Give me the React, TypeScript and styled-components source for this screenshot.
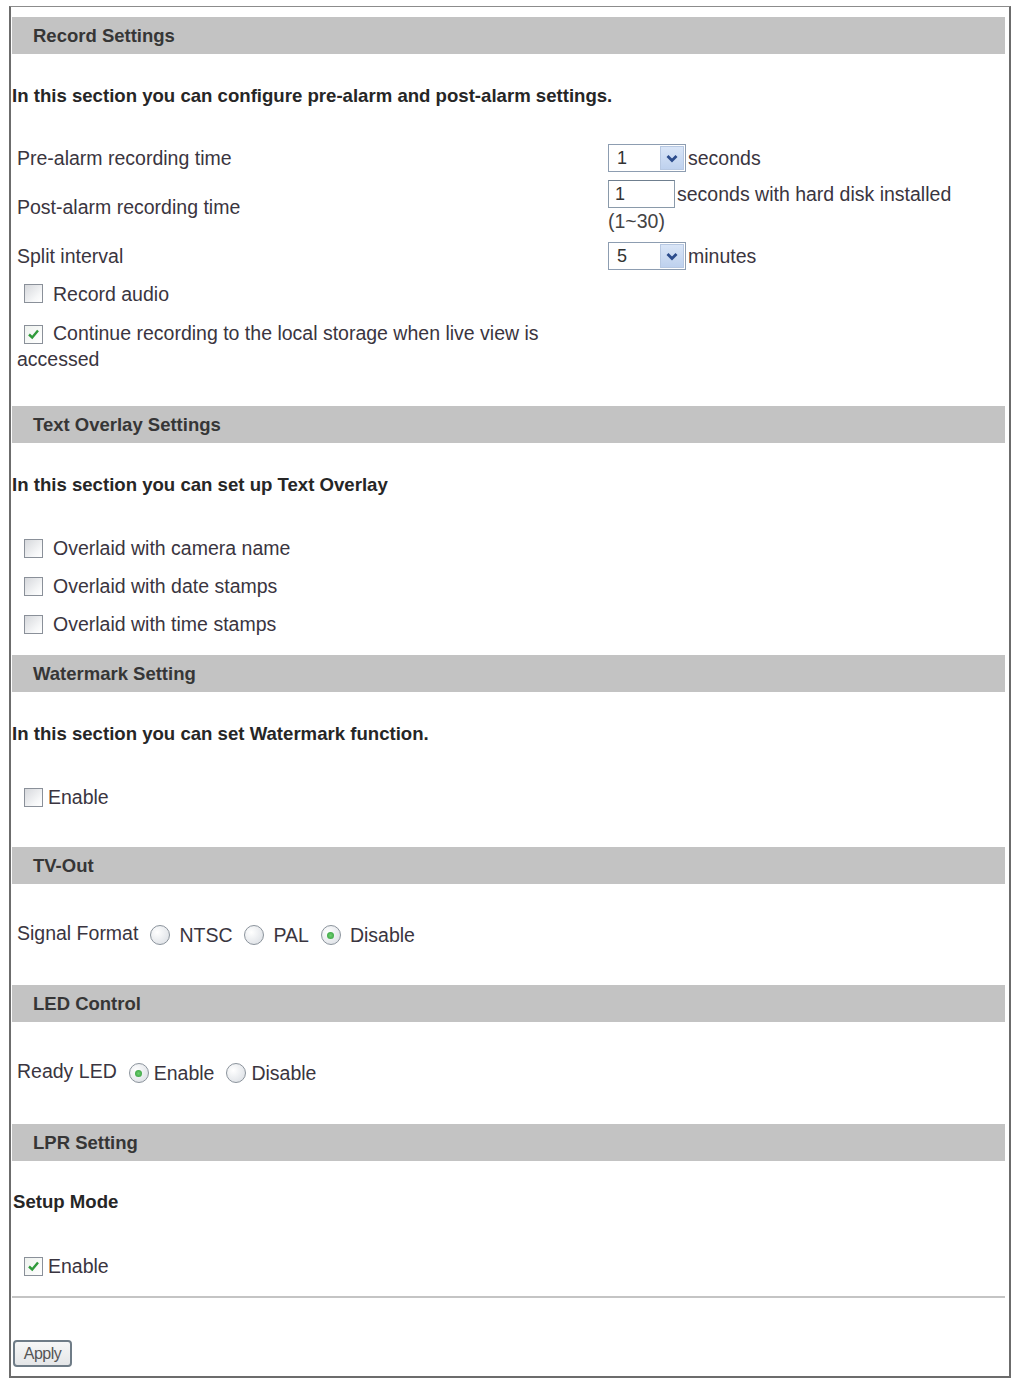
import styled, { createGlobalStyle } from 'styled-components';

const GlobalStyle = createGlobalStyle`
  body {
    margin: 0;
    background: #ffffff;
    font-family: "Liberation Sans", Arial, sans-serif;
    color: #383838;
  }
`;

const Frame = styled.div`
  box-sizing: border-box;
  width: 1002px;
  margin: 6px 0 0 9px;
  border: 2px solid #6c6c6c;
  border-top: 1px solid #8c8c8c;
  padding: 10px 4px 9px 1px;
`;

const SectionHeader = styled.div<{ $gap: number }>`
  display: flex;
  align-items: center;
  height: 37px;
  margin-top: ${({ $gap }) => $gap}px;
  padding-left: 21px;
  background: #c3c3c3;
  color: #363636;
  font-size: 18.5px;
  font-weight: bold;
`;

const Description = styled.div<{ $gap?: number }>`
  margin-top: ${({ $gap = 30 }) => $gap}px;
  line-height: 24px;
  font-size: 18.6px;
  font-weight: bold;
  color: #262626;
`;

const SubTitle = styled(Description)`
  padding-left: 1px;
`;

const SettingsTable = styled.div`
  display: grid;
  grid-template-columns: 596px 1fr;
  row-gap: 2px;
  margin-top: 31px;
  padding: 2px 0;
`;

const LabelCell = styled.div<{ $pad?: number }>`
  display: flex;
  align-items: center;
  padding: ${({ $pad = 3 }) => $pad}px 0 ${({ $pad = 3 }) => $pad}px 5px;
  font-size: 19.5px;
  color: #3a3540;
`;

const ControlCell = styled.div`
  display: flex;
  flex-direction: column;
  justify-content: center;
  padding: 3px 0;
  font-size: 19.5px;
  color: #3a3540;
`;

const ControlLine = styled.div`
  display: flex;
  align-items: center;
  gap: 2px;
  height: 28px;
`;

const HintLine = styled.div`
  line-height: 26px;
  color: #444;
`;

const SelectBox = styled.div`
  box-sizing: border-box;
  display: flex;
  align-items: center;
  width: 78px;
  height: 28px;
  padding: 1px;
  border: 1px solid #8d9db1;
  background: #fff;
`;

const SelectValue = styled.span`
  flex: 1;
  padding-left: 7px;
  font-size: 18px;
  color: #333;
`;

const SelectArrow = styled.span`
  display: flex;
  align-items: center;
  justify-content: center;
  width: 24px;
  height: 24px;
  border: 1px solid #b7c8e2;
  box-sizing: border-box;
  background: linear-gradient(#d9e5f7, #bed1ee);
`;

const TextBox = styled.div`
  box-sizing: border-box;
  width: 67px;
  height: 28px;
  padding-left: 6px;
  border: 1px solid #8a9aaa;
  border-top-color: #6f7f8f;
  line-height: 26px;
  font-size: 18px;
  color: #333;
`;

const CheckItem = styled.div<{ $height?: number; $gap?: number }>`
  min-height: ${({ $height = 38 }) => $height}px;
  display: flex;
  align-items: center;
  padding-left: 5px;
  font-size: 19.5px;
  color: #3a3540;

  & > span {
    margin-right: ${({ $gap = 10 }) => $gap}px;
  }
`;

const WrapText = styled.div`
  line-height: 26px;
  font-size: 19.5px;
  color: #3a3540;
`;

const Box = styled.span<{ $checked?: boolean }>`
  box-sizing: border-box;
  display: inline-flex;
  align-items: center;
  justify-content: center;
  vertical-align: -2px;
  width: 19px;
  height: 19px;
  margin-left: 7px;
  border: 1px solid #8a9099;
  background: ${({ $checked }) =>
    $checked
      ? 'linear-gradient(135deg, #eef2ee, #ffffff)'
      : 'linear-gradient(135deg, #d6d8dc, #f6f7f8 70%, #ffffff)'};
`;

const InlineBox = styled(Box)`
  margin-right: 10px;
`;

const RadioRow = styled.div<{ $gap: number }>`
  display: flex;
  align-items: center;
  height: 38px;
  margin-top: ${({ $gap }) => $gap}px;
  padding-left: 5px;
  font-size: 19.5px;
  color: #3a3540;
`;

const RadioLabel = styled.span`
  position: relative;
  top: -2px;
`;

const RadioOption = styled.span<{ $space: number }>`
  display: inline-flex;
  align-items: center;
  margin-left: 12px;

  & > span:last-child {
    margin-left: ${({ $space }) => $space}px;
  }
`;

const RadioCircle = styled.span<{ $on?: boolean }>`
  box-sizing: border-box;
  display: inline-flex;
  align-items: center;
  justify-content: center;
  width: 20px;
  height: 20px;
  border-radius: 50%;
  border: 1px solid #8b939c;
  background: radial-gradient(circle at 35% 35%, #ffffff, #e3e6ea 70%, #d3d7dc);

  &::after {
    content: '';
    display: ${({ $on }) => ($on ? 'block' : 'none')};
    width: 7px;
    height: 7px;
    border-radius: 50%;
    background: radial-gradient(circle, #6fd06f, #2f9a3a);
  }
`;

const OptionList = styled.div<{ $gap: number }>`
  margin-top: ${({ $gap }) => $gap}px;
`;

const Rule = styled.hr`
  margin: 11px 0 0;
  height: 2px;
  border: none;
  background: #c4c4c4;
`;

const ApplyButton = styled.button`
  box-sizing: border-box;
  display: block;
  width: 59px;
  height: 27px;
  margin: 42px 0 0 1px;
  padding: 0;
  border: 2px solid #6f7c87;
  border-radius: 4px;
  background: linear-gradient(#f7f7f7, #e4e6e8);
  font-family: "Liberation Sans", Arial, sans-serif;
  font-size: 16px;
  letter-spacing: -0.5px;
  color: #555;
`;

function Chevron() {
  return (
    <svg width="12" height="9" viewBox="0 0 12 9">
      <path d="M1.5 2 L6 6.5 L10.5 2" fill="none" stroke="#2c4c8c" strokeWidth="2.8" />
    </svg>
  );
}

function Tick() {
  return (
    <svg width="15" height="15" viewBox="0 0 15 15">
      <path d="M3 7.5 L6.2 10.5 L12 3.5" fill="none" stroke="#2f9a3a" strokeWidth="2.4" />
    </svg>
  );
}

function Select({ value }: { value: string }) {
  return (
    <SelectBox>
      <SelectValue>{value}</SelectValue>
      <SelectArrow>
        <Chevron />
      </SelectArrow>
    </SelectBox>
  );
}

function Check({ checked, label, gap }: { checked?: boolean; label: string; gap?: number }) {
  return (
    <CheckItem $gap={gap}>
      <Box $checked={checked}>{checked && <Tick />}</Box>
      {label}
    </CheckItem>
  );
}

function Radio({ on, label, space }: { on?: boolean; label: string; space: number }) {
  return (
    <RadioOption $space={space}>
      <RadioCircle $on={on} />
      <span>{label}</span>
    </RadioOption>
  );
}

export default function App() {
  return (
    <>
      <GlobalStyle />
      <Frame>
        <SectionHeader $gap={0}>Record Settings</SectionHeader>
        <Description>In this section you can configure pre-alarm and post-alarm settings.</Description>
        <SettingsTable>
          <LabelCell>Pre-alarm recording time</LabelCell>
          <ControlCell>
            <ControlLine>
              <Select value="1" />
              seconds
            </ControlLine>
          </ControlCell>

          <LabelCell>Post-alarm recording time</LabelCell>
          <ControlCell>
            <ControlLine>
              <TextBox>1</TextBox>
              seconds with hard disk installed
            </ControlLine>
            <HintLine>(1~30)</HintLine>
          </ControlCell>

          <LabelCell>Split interval</LabelCell>
          <ControlCell>
            <ControlLine>
              <Select value="5" />
              minutes
            </ControlLine>
          </ControlCell>

          <LabelCell $pad={6}>
            <WrapText>
              <InlineBox />
              Record audio
            </WrapText>
          </LabelCell>
          <div />

          <LabelCell $pad={5}>
            <WrapText>
              <InlineBox $checked>
                <Tick />
              </InlineBox>
              Continue recording to the local storage when live view is accessed
            </WrapText>
          </LabelCell>
          <div />
        </SettingsTable>

        <SectionHeader $gap={27}>Text Overlay Settings</SectionHeader>
        <Description>In this section you can set up Text Overlay</Description>
        <OptionList $gap={32}>
          <Check label="Overlaid with camera name" />
          <Check label="Overlaid with date stamps" />
          <Check label="Overlaid with time stamps" />
        </OptionList>

        <SectionHeader $gap={12}>Watermark Setting</SectionHeader>
        <Description>In this section you can set Watermark function.</Description>
        <OptionList $gap={32}>
          <Check label="Enable" gap={5} />
        </OptionList>

        <SectionHeader $gap={31}>TV-Out</SectionHeader>
        <RadioRow $gap={32}>
          <RadioLabel>Signal Format</RadioLabel>
          <Radio label="NTSC" space={9} />
          <Radio label="PAL" space={9} />
          <Radio label="Disable" space={9} on />
        </RadioRow>

        <SectionHeader $gap={31}>LED Control</SectionHeader>
        <RadioRow $gap={32}>
          <RadioLabel>Ready LED</RadioLabel>
          <Radio label="Enable" space={5} on />
          <Radio label="Disable" space={5} />
        </RadioRow>

        <SectionHeader $gap={32}>LPR Setting</SectionHeader>
        <SubTitle $gap={29}>Setup Mode</SubTitle>
        <OptionList $gap={33}>
          <Check label="Enable" gap={5} checked />
        </OptionList>

        <Rule />
        <ApplyButton>Apply</ApplyButton>
      </Frame>
    </>
  );
}
